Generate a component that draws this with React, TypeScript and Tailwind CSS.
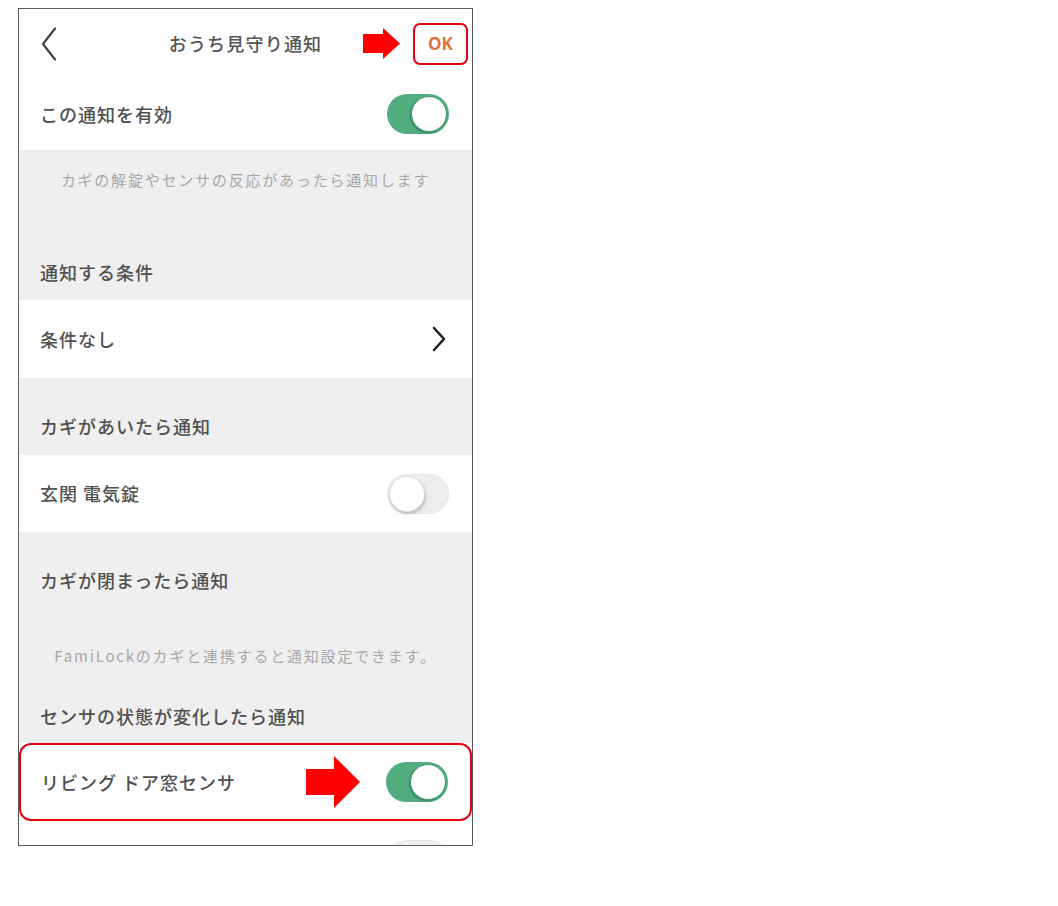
import React from "react";

const JP = { fontFamily: '"Noto Sans CJK JP", "Noto Sans", sans-serif' };

function Toggle({ on }: { on: boolean }) {
  return on ? (
    <div className="relative h-[40px] w-[62px] rounded-full bg-[#52ad7f]">
      <div className="absolute right-[2px] top-[2px] h-[36px] w-[36px] rounded-full border border-[#3f9a6c] bg-white shadow-[-1px_1px_2px_rgba(0,0,0,0.25)]" />
    </div>
  ) : (
    <div className="relative h-[40px] w-[62px] rounded-full border border-[#e6e6e6] bg-[#ededed]">
      <div className="absolute left-[1px] top-[1px] h-[36px] w-[36px] rounded-full border border-[#dcdcdc] bg-white shadow-[1px_2px_3px_rgba(0,0,0,0.2)]" />
    </div>
  );
}

function RowText({ children }: { children: React.ReactNode }) {
  return (
    <span className="text-[18px] font-medium tracking-[1px] text-[#505050]" style={JP}>
      {children}
    </span>
  );
}

function Heading({ children }: { children: React.ReactNode }) {
  return (
    <div className="h-[24px] pl-[21px] text-[18px] font-medium leading-[24px] tracking-[1px] text-[#505050]" style={JP}>
      {children}
    </div>
  );
}

function Desc({ children }: { children: React.ReactNode }) {
  return (
    <div className="h-[20px] text-center text-[15px] leading-[20px] tracking-[1.8px] text-[#a8a8a8]" style={JP}>
      {children}
    </div>
  );
}

export default function App() {
  return (
    <div className="min-h-[906px] w-[1058px] bg-white pl-[18px] pt-[8px]">
      <div className="h-[838px] w-[455px] overflow-hidden border border-[#5a5a5a] bg-white">
        {/* header */}
        <div className="grid h-[69px] grid-cols-[1fr_auto_1fr] items-center">
          <div className="flex items-center pl-[22px]">
            <svg width="16" height="34" viewBox="0 0 16 34" fill="none">
              <path d="M14 1.5 L2 17 L14 32.5" stroke="#444" strokeWidth="2.2" strokeLinecap="round" strokeLinejoin="round" />
            </svg>
          </div>
          <div className="text-[18px] font-medium tracking-[1.2px] text-[#555555]" style={JP}>
            おうち見守り通知
          </div>
          <div className="flex items-center justify-end gap-[13px] pr-[4px]">
            <svg width="37" height="31" viewBox="0 0 37 31">
              <polygon points="0,6 20,6 20,0 37,15.5 20,31 20,25 0,25" fill="#ff0000" />
            </svg>
            <div
              className="flex h-[42px] w-[55px] items-center justify-center rounded-[7px] border-2 border-[#e60012] text-[17px] font-bold text-[#db7440]"
              style={{ fontFamily: '"Open Sans", sans-serif' }}
            >
              OK
            </div>
          </div>
        </div>

        {/* enable row */}
        <div className="flex h-[72px] items-center justify-between pl-[21px] pr-[23px]">
          <RowText>この通知を有効</RowText>
          <Toggle on />
        </div>

        {/* gray 1 */}
        <div className="flex h-[150px] flex-col justify-between bg-[#efefef] pb-[16px] pt-[20px]">
          <Desc>カギの解錠やセンサの反応があったら通知します</Desc>
          <Heading>通知する条件</Heading>
        </div>

        {/* condition row */}
        <div className="flex h-[78px] items-center justify-between pl-[21px] pr-[26px]">
          <RowText>条件なし</RowText>
          <svg width="14" height="26" viewBox="0 0 14 26" fill="none">
            <path d="M2 2 L12 13 L2 24" stroke="#222" strokeWidth="2.6" strokeLinecap="round" strokeLinejoin="round" />
          </svg>
        </div>

        {/* gray 2 */}
        <div className="flex h-[77px] flex-col justify-end bg-[#efefef] pb-[17px]">
          <Heading>カギがあいたら通知</Heading>
        </div>

        {/* lock row */}
        <div className="flex h-[77px] items-center justify-between pl-[21px] pr-[23px]">
          <RowText>玄関 電気錠</RowText>
          <Toggle on={false} />
        </div>

        {/* gray 3 */}
        <div className="flex h-[211px] flex-col bg-[#efefef] pb-[15px] pt-[36px]">
          <Heading>カギが閉まったら通知</Heading>
          <div className="mt-[54px]">
            <Desc>FamiLockのカギと連携すると通知設定できます。</Desc>
          </div>
          <div className="mt-[38px]">
            <Heading>センサの状態が変化したら通知</Heading>
          </div>
        </div>

        {/* sensor row highlighted */}
        <div className="flex h-[78px] items-center justify-between rounded-[12px] border-2 border-[#e60012] pl-[20px] pr-[22px]">
          <RowText>リビング ドア窓センサ</RowText>
          <div className="flex items-center gap-[26px]">
            <svg width="54" height="52" viewBox="0 0 54 52">
              <polygon points="0,13 28,13 28,0 54,26 28,52 28,39 0,39" fill="#ff0000" />
            </svg>
            <Toggle on />
          </div>
        </div>

        {/* next row (cut off) */}
        <div className="flex h-[78px] items-center justify-end pr-[23px]">
          <div className="h-[40px] w-[62px] rounded-full border border-[#e6e6e6] bg-[#f0f0f0]" />
        </div>
      </div>
    </div>
  );
}
